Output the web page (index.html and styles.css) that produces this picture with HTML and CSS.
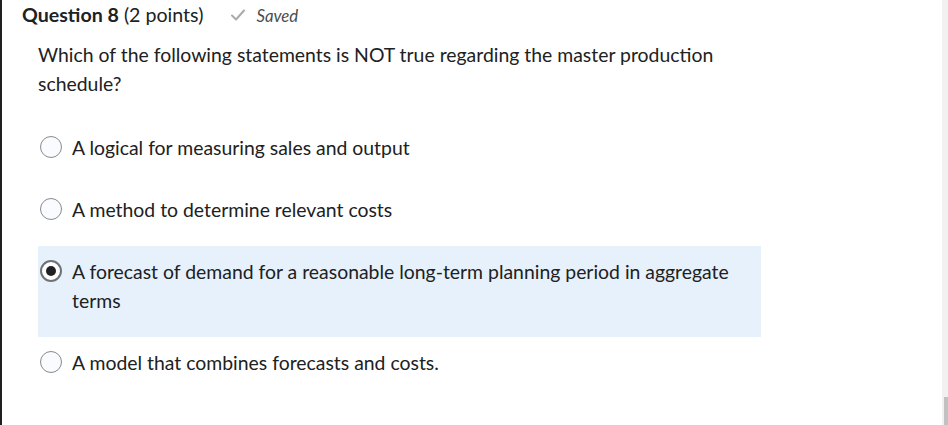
FILE: index.html
```html
<!DOCTYPE html>
<html>
<head>
<meta charset="utf-8">
<link rel="stylesheet" href="styles.css">
</head>
<body>
<div class="frame">
  <div class="content">
    <div class="qhead">
      <h2 class="qtitle"><strong>Question 8</strong> (2 points)</h2>
      <span class="saved">
        <svg class="check" width="16" height="14" viewBox="0 0 16 14"><path d="M2 7.5 L6 11.5 L14 2.5" fill="none" stroke="#a8acaf" stroke-width="2" stroke-linecap="round" stroke-linejoin="round"/></svg>
        <em>Saved</em>
      </span>
    </div>
    <div class="qtext">Which of the following statements is NOT true regarding the master production schedule?</div>
    <div class="options">
      <label class="opt"><span class="radio"></span><span class="otext">A logical for measuring sales and output</span></label>
      <label class="opt"><span class="radio"></span><span class="otext">A method to determine relevant costs</span></label>
      <label class="opt selected"><span class="radio checked"></span><span class="otext">A forecast of demand for a reasonable long-term planning period in aggregate terms</span></label>
      <label class="opt"><span class="radio"></span><span class="otext">A model that combines forecasts and costs.</span></label>
    </div>
  </div>
  <div class="scrollbar"><div class="thumb"></div></div>
</div>
</body>
</html>
```
FILE: styles.css
```css
html, body {
  margin: 0;
  padding: 0;
  background: #fff;
}
body {
  font-family: Lato, "Noto Sans", sans-serif;
  color: #202122;
}
.frame {
  width: 948px;
  height: 425px;
  display: flex;
  border-left: 2px solid #1f1f1f;
  box-sizing: border-box;
  overflow: hidden;
}
.content {
  flex: 1;
  padding-left: 20px;
}
.qhead {
  display: flex;
  align-items: center;
  height: 30px;
  gap: 27px;
}
.qtitle {
  margin: 0;
  font-size: 19.6px;
  font-weight: 400;
  line-height: 30px;
}
.qtitle strong {
  font-weight: 700;
}
.saved {
  display: flex;
  align-items: center;
  gap: 10px;
  color: #494c4e;
  font-size: 16.8px;
}
.saved em {
  font-style: italic;
}
.qtext {
  margin-top: 10px;
  padding-left: 16px;
  width: 700px;
  font-size: 19.4px;
  line-height: 29px;
}
.options {
  margin-top: 24px;
  padding-left: 16px;
  display: flex;
  flex-direction: column;
}
.opt {
  display: flex;
  align-items: flex-start;
  width: 723px;
  box-sizing: border-box;
  padding: 11px 20px 22px 2px;
  font-size: 19.4px;
  line-height: 29px;
}
.opt.selected {
  background: #e6f1fc;
}
.radio {
  flex: none;
  width: 22px;
  height: 22px;
  margin-top: 3px;
  margin-right: 10px;
  border: 1px solid #878b8e;
  border-radius: 50%;
  box-sizing: border-box;
  background: #f9fbff;
  display: flex;
  align-items: center;
  justify-content: center;
}
.radio.checked {
  background: #fff;
  border-width: 2px;
  border-color: #6e7376;
}
.radio.checked::after {
  content: "";
  width: 10px;
  height: 10px;
  border-radius: 50%;
  background: #202122;
}
.scrollbar {
  flex: none;
  width: 6px;
  background: #f1f1f1;
  display: flex;
  flex-direction: column;
  justify-content: flex-end;
}
.thumb {
  height: 28px;
  width: 4px;
  margin-left: 2px;
  background: #c1c1c1;
}
```
